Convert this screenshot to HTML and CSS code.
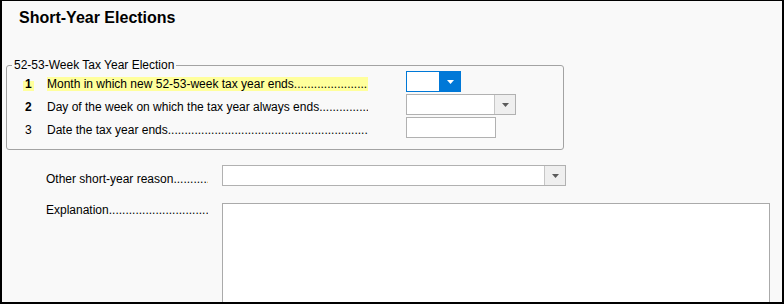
FILE: index.html
```html
<!DOCTYPE html>
<html>
<head>
<meta charset="utf-8">
<link rel="stylesheet" href="styles.css">
</head>
<body>
<div class="title">Short-Year Elections</div>
<fieldset class="group">
  <legend>52-53-Week Tax Year Election</legend>
  <div class="grid">
    <div class="num hl"><b>1</b></div>
    <div class="label hl-label">Month in which new 52-53-week tax year ends.........................................................................</div>
    <div class="select active" style="width:55px"><span class="btn"><svg width="7" height="4" viewBox="0 0 7 4"><polygon points="0,0 7,0 3.5,4" fill="#fff"/></svg></span></div>

    <div class="num"><b>2</b></div>
    <div class="label">Day of the week on which the tax year always ends.........................................................................</div>
    <div class="select" style="width:110px"><span class="btn"><svg width="7" height="4" viewBox="0 0 7 4"><polygon points="0,0 7,0 3.5,4" fill="#5a5a5a"/></svg></span></div>

    <div class="num">3</div>
    <div class="label">Date the tax year ends.........................................................................................................................</div>
    <div class="input"></div>
  </div>
</fieldset>
<div class="other">
  <div class="label2">Other short-year reason..................................</div>
  <div class="select wide"><span class="btn"><svg width="7" height="4" viewBox="0 0 7 4"><polygon points="0,0 7,0 3.5,4" fill="#5a5a5a"/></svg></span></div>
  <div class="label2 top">Explanation..................................................................</div>
  <div class="textarea"></div>
</div>
</body>
</html>
```
FILE: styles.css
```css
html, body { margin: 0; padding: 0; }
body {
  height: 304px;
  box-sizing: border-box;
  border-style: solid;
  border-color: #000;
  border-width: 1px 2px 2px 2px;
  background: #f9f9f9;
  overflow: hidden;
  font-family: "Liberation Sans", Arial, sans-serif;
  font-size: 12px;
  color: #000;
}
.title {
  margin: 7px 0 0 17px;
  font-size: 16px;
  font-weight: bold;
  line-height: 20px;
}
.group {
  margin: 31px 0 0 4px;
  padding: 0 0 11px 16px;
  width: 558px;
  box-sizing: border-box;
  border: 1px solid #a3a3a3;
  border-radius: 3px;
  min-inline-size: 0;
}
.group legend {
  margin-left: -11px;
  padding: 0 2px;
  line-height: 12px;
  font-size: 12px;
}
.grid {
  display: grid;
  grid-template-columns: 24px 321px auto;
  column-gap: 0;
  grid-template-rows: 21px 21px 21px;
  row-gap: 2px;
  align-items: start;
  justify-items: start;
}
.num {
  margin-top: 6px;
  line-height: 14px;
  height: 14px;
  padding: 0 2px;
}
.num.hl {
  background: linear-gradient(transparent 4px, #ffff9c 4px);
}
.label {
  margin-top: 6px;
  width: 321px;
  line-height: 14px;
  white-space: nowrap;
  overflow: hidden;
}
.hl-label { background: #ffff9c; }
.select {
  margin-left: 38px;
  display: flex;
  height: 21px;
  box-sizing: border-box;
  border: 1px solid #b1b1b1;
  background: #fff;
}
.select .btn {
  margin-left: auto;
  width: 21px;
  box-sizing: border-box;
  border-left: 1px solid #c6c6c6;
  background: #efefef;
  display: flex;
  align-items: center;
  justify-content: center;
}
.select.active { border-color: #0078d7; }
.select.active .btn {
  background: #0078d7;
  border-left: 1px solid #0078d7;
  width: 22px;
  margin-right: -1px;
  margin-top: -1px;
  margin-bottom: -1px;
}
.input {
  margin-left: 38px;
  width: 90px;
  height: 21px;
  box-sizing: border-box;
  border: 1px solid #b1b1b1;
  background: #fff;
}
.other {
  display: grid;
  grid-template-columns: 162px auto;
  column-gap: 14px;
  row-gap: 17px;
  margin: 15px 0 0 44px;
  align-items: start;
}
.other .select { margin-left: 0; }
.label2 {
  margin-top: 7px;
  line-height: 14px;
  white-space: nowrap;
  overflow: hidden;
}
.label2.top { margin-top: 0; }
.select.wide { width: 344px; }
.textarea {
  width: 548px;
  height: 130px;
  box-sizing: border-box;
  border: 1px solid #aaa;
  background: #fff;
}
```
